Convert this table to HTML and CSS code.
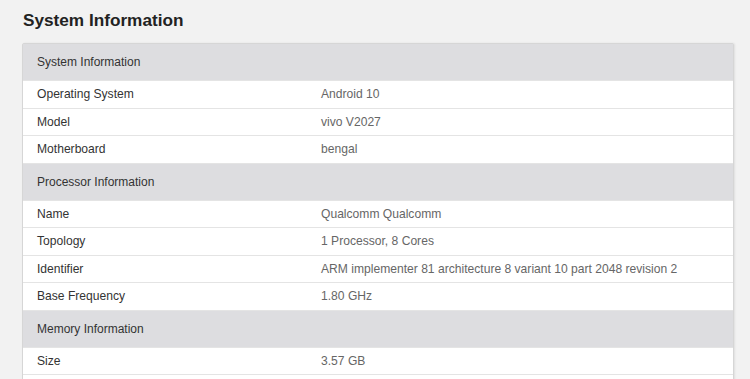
FILE: index.html
```html
<!DOCTYPE html>
<html>
<head>
<meta charset="utf-8">
<link rel="stylesheet" href="styles.css">
</head>
<body>
<div class="page">
  <h1 class="title">System Information</h1>
  <div class="card">
    <div class="section">System Information</div>
    <div class="row"><span class="label">Operating System</span><span class="value">Android 10</span></div>
    <div class="row"><span class="label">Model</span><span class="value">vivo V2027</span></div>
    <div class="row"><span class="label">Motherboard</span><span class="value">bengal</span></div>
    <div class="section">Processor Information</div>
    <div class="row"><span class="label">Name</span><span class="value">Qualcomm Qualcomm</span></div>
    <div class="row"><span class="label">Topology</span><span class="value">1 Processor, 8 Cores</span></div>
    <div class="row"><span class="label">Identifier</span><span class="value">ARM implementer 81 architecture 8 variant 10 part 2048 revision 2</span></div>
    <div class="row"><span class="label">Base Frequency</span><span class="value">1.80 GHz</span></div>
    <div class="section">Memory Information</div>
    <div class="row"><span class="label">Size</span><span class="value">3.57 GB</span></div>
  </div>
</div>
</body>
</html>
```

FILE: styles.css
```css
html, body {
  margin: 0;
  padding: 0;
  background: #f2f2f2;
  font-family: "Liberation Sans", Arial, sans-serif;
}
.page {
  padding: 9px 16px 0 22px;
}
.title {
  margin: 0 0 12px 1px;
  font-size: 17.2px;
  font-weight: bold;
  color: #222;
  line-height: 22px;
}
.card {
  background: #fff;
  border: 1px solid #d6d6d6;
  border-radius: 2px;
  box-shadow: 1px 0 2px rgba(0,0,0,0.08);
  padding-bottom: 30px;
}
.section {
  background: #dddde0;
  color: #333;
  font-size: 12px;
  height: 36px;
  line-height: 37px;
  padding-left: 14px;
  border-bottom: 1px solid #e4e4e4;
}
.row {
  display: grid;
  grid-template-columns: 284px 1fr;
  height: 26.5px;
  line-height: 27px;
  font-size: 12.1px;
  padding-left: 14px;
  border-bottom: 1px solid #e4e4e4;
}
.label { color: #333; }
.value { color: #666; }
```
